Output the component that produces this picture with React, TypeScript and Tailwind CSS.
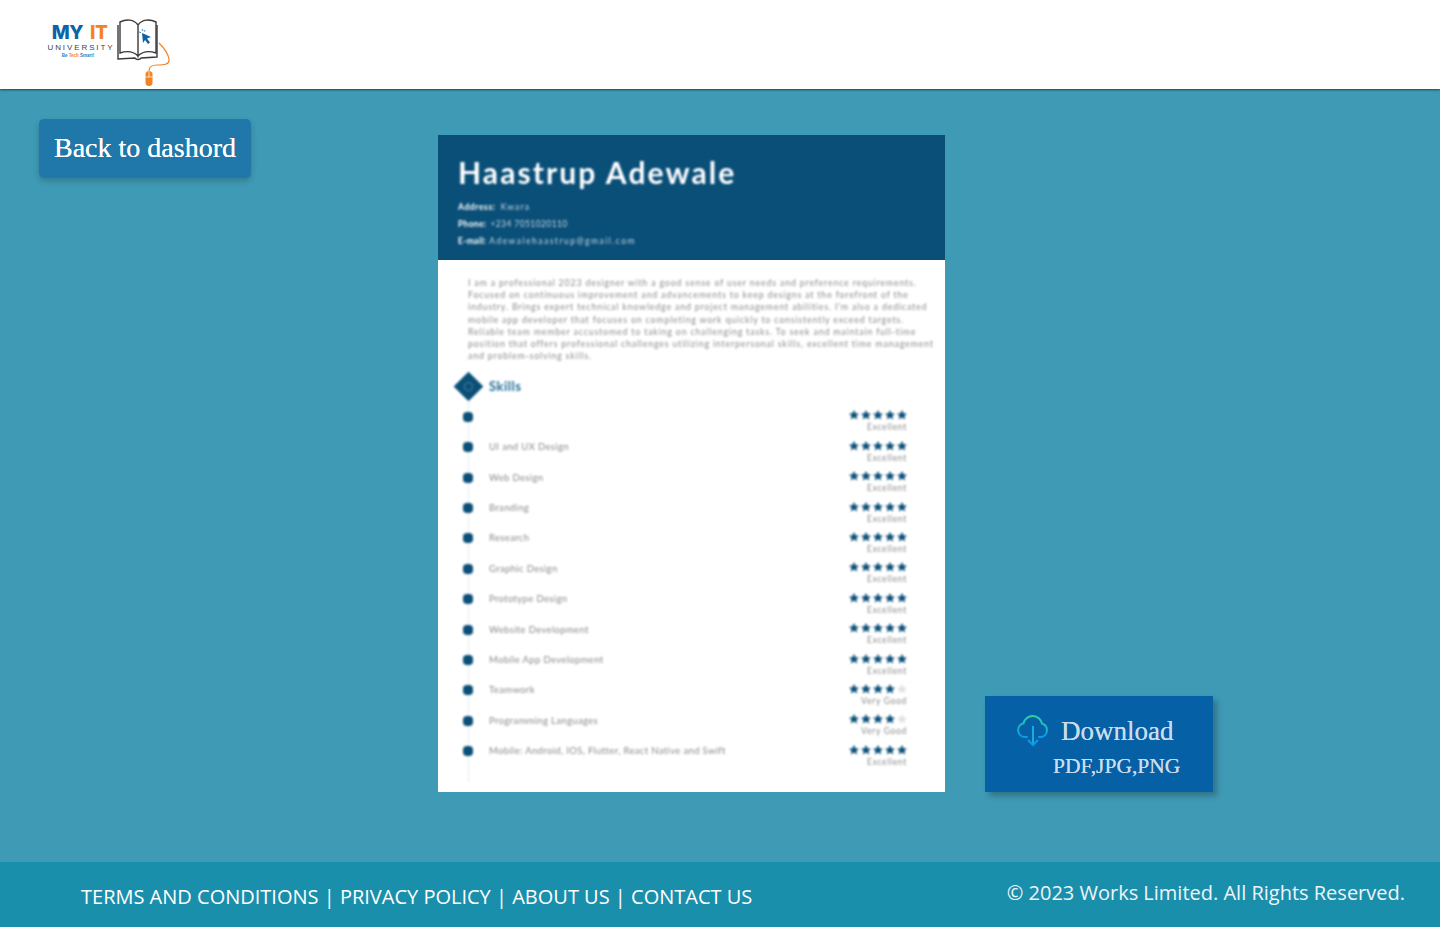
const ABOUT = [
  "I am a professional 2023 designer with a good sense of user needs and preference requirements.",
  "Focused on continuous improvement and advancements to keep designs at the forefront of the",
  "industry. Brings expert technical knowledge and project management abilities. I'm also a dedicated",
  "mobile app developer that focuses on completing work quickly to consistently exceed targets.",
  "Reliable team member accustomed to taking on challenging tasks. To seek and maintain full-time",
  "position that offers professional challenges utilizing interpersonal skills, excellent time management",
  "and problem-solving skills.",
];

const SKILLS = [
  { name: "", stars: 5, label: "Excellent" },
  { name: "UI and UX Design", stars: 5, label: "Excellent" },
  { name: "Web Design", stars: 5, label: "Excellent" },
  { name: "Branding", stars: 5, label: "Excellent" },
  { name: "Research", stars: 5, label: "Excellent" },
  { name: "Graphic Design", stars: 5, label: "Excellent" },
  { name: "Prototype Design", stars: 5, label: "Excellent" },
  { name: "Website Development", stars: 5, label: "Excellent" },
  { name: "Mobile App Development", stars: 5, label: "Excellent" },
  { name: "Teamwork", stars: 4, label: "Very Good" },
  { name: "Programming Languages", stars: 4, label: "Very Good" },
  { name: "Mobile: Android, IOS, Flutter, React Native and Swift", stars: 5, label: "Excellent" },
];

const LINKS = ["TERMS AND CONDITIONS", "PRIVACY POLICY", "ABOUT US", "CONTACT US"];

function Star({ on }: { on: boolean }) {
  return (
    <svg viewBox="0 0 24 24" className="w-[10px] h-[10px]">
      <path
        d="M12 0l3.800 8 8.200.8-6.200 5.400 1.900 8.300L12 18l-7.700 4.500 1.900-8.300L0 8.800 8.200 8z"
        fill={on ? "#0a4f78" : "#dfe3e6"}
      />
    </svg>
  );
}

function Logo() {
  return (
    <div className="flex items-start">
      <div className="w-[66px] mr-[3px] pt-[25px] flex flex-col items-center">
        <p className="mr-[3px] text-[19px] leading-[16px] font-extrabold font-['Inter',sans-serif] tracking-[-0.5px] whitespace-nowrap">
          <span className="text-[#0b63a8]">MY</span>
          <span className="text-[#f58220] ml-[7px]">IT</span>
        </p>
        <p className="mt-[2px] text-[8px] leading-[10px] tracking-[1.900px] text-[#444444] font-['Liberation_Sans',sans-serif] whitespace-nowrap">
          UNIVERSITY
        </p>
        <p className="mr-[6px] text-[4.500px] leading-[6px] font-bold text-[#2f7fb8] font-['Liberation_Sans',sans-serif] whitespace-nowrap">
          Be <span className="text-[#f58220]">Tech</span> Smart!
        </p>
      </div>
      <svg viewBox="0 0 56 70" className="w-[56px] h-[70px] mt-[18px]" fill="none">
        <path
          d="M3 4c6-3 14-3 18 3v31c-5-5-12-5-18-3zM21 7c4-6 12-6 18-3v31c-6-2-13-2-18 3z"
          stroke="#3a3a3a"
          strokeWidth="1.4"
        />
        <path d="M1 7v34l17-1c1 2 5 2 6 0l16-1V7" stroke="#3a3a3a" strokeWidth="1.4" />
        <path d="M25 15l9 4-4 1.500 3 4-2 1.500-3-4-2 3z" fill="#0b63a8" />
        <path d="M25 11l1 2M22 14l2 .6M28 12l-.6 1.600" stroke="#0b63a8" strokeWidth="0.8" />
        <path
          d="M42 25c4 4 9 10 10 16 1 6-6 6-12 6-5 0-8 1-8 6"
          stroke="#f58220"
          strokeWidth="1.200"
        />
        <rect x="28.500" y="53" width="7" height="15" rx="3.500" fill="#f58220" />
        <path d="M28.500 59h7M32 53v6" stroke="#ffffff" strokeWidth="0.7" />
      </svg>
    </div>
  );
}

function Resume() {
  return (
    <div className="w-[507px] h-[657px] bg-white overflow-hidden font-['Lato',sans-serif]">
      <div className="h-[125px] bg-[#0a4f78] overflow-hidden pl-[20px] pt-[19px] text-white">
        <div className="blur-[0.8px]">
          <h1 className="text-[30px] leading-[36px] font-bold tracking-[2.100px] whitespace-nowrap">
            Haastrup Adewale
          </h1>
          <div className="mt-[9px] text-[8.500px] leading-[17px] text-[#c5d6e1] whitespace-nowrap">
            <p><b className="text-white tracking-[0.6px]">Address:</b> <span className="ml-[3px] tracking-[1.200px]">Kwara</span></p>
            <p><b className="text-white tracking-[0.3px]">Phone:</b> <span className="ml-[2px] tracking-[0.400px]">+234 7051020110</span></p>
            <p><b className="text-white tracking-[0.300px]">E-mail:</b> <span className="ml-[1px] tracking-[1.500px]">Adewalehaastrup@gmail.com</span></p>
          </div>
        </div>
      </div>

      <div className="pl-[30px] pt-[17px] text-[8.900px] leading-[12.200px] tracking-[0.800px] text-[#8c8c8c] blur-[0.8px] whitespace-nowrap">
        {ABOUT.map((line) => (
          <p key={line}>{line}</p>
        ))}
      </div>

      <div className="mt-[9px] pl-[15px] flex items-center gap-[6px] blur-[0.8px]">
        <div className="w-[30px] h-[30px] flex items-center justify-center">
          <div className="w-[21px] h-[21px] rotate-45 bg-[#0a4f78] flex items-center justify-center">
            <div className="w-[9px] h-[9px] rounded-full border border-[#4d83a3]" />
          </div>
        </div>
        <span className="text-[13px] leading-[16px] font-bold tracking-[0.5px] text-[#1f6a96]">Skills</span>
      </div>

      <div className="relative mt-[9px] pl-[25px] pr-[38px] blur-[0.8px]">
        <div className="absolute left-[30px] top-[-9px] h-[381px] w-px bg-[#e6e9eb]" />
        {SKILLS.map((s, i) => (
          <div key={i} className="h-[30.400px] flex items-start justify-between">
            <div className="flex items-center pt-[0.500px]">
              <div className="relative w-[10px] h-[10px] bg-[#0a4f78] rounded-[4px]" />
              <span className="ml-[16px] h-[12px] text-[9.500px] leading-[12px] tracking-[0.350px] text-[#8a8a8a] whitespace-nowrap">
                {s.name}
              </span>
            </div>
            <div className="flex flex-col items-end">
              <div className="flex gap-[2px]">
                {[0, 1, 2, 3, 4].map((n) => (
                  <Star key={n} on={n < s.stars} />
                ))}
              </div>
              <span className="mt-[2px] text-[8.500px] leading-[11px] tracking-[0.700px] text-[#8a8a8a]">{s.label}</span>
            </div>
          </div>
        ))}
      </div>
    </div>
  );
}

export default function App() {
  return (
    <div className="min-h-screen flex flex-col bg-[#3f9ab5]">
      <header className="h-[89px] bg-white pl-[48px] shadow-[0_1px_2px_rgba(0,40,60,0.7)]">
        <Logo />
      </header>

      <main className="h-[773px] flex">
        <div className="w-[438px] pl-[39px] pt-[30px]">
          <button className="w-[212px] h-[59px] pb-[2px] rounded-[5px] bg-[#1f77aa] text-white text-[28px] font-['Liberation_Serif',serif] [text-shadow:0_0_0.6px_#ffffff] shadow-[0_3px_6px_rgba(0,0,0,0.2)]">
            Back to dashord
          </button>
        </div>
        <div className="pt-[46px]">
          <Resume />
        </div>
        <div className="pt-[607px] ml-[40px]">
          <button className="w-[228px] h-[96px] bg-[#0560a5] text-[#c9dcec] font-['Liberation_Serif',serif] [text-shadow:0_0_0.6px_#c9dcec] shadow-[4px_4px_6px_rgba(0,0,0,0.25)] flex flex-col items-start">
            <span className="flex items-center pl-[31px] pt-[18px]">
              <svg viewBox="0 0 34 34" className="w-[34px] h-[34px]" fill="none">
                <defs>
                  <linearGradient id="cloud" x1="0" y1="0" x2="0" y2="1">
                    <stop offset="0" stopColor="#2ad6a8" />
                    <stop offset="1" stopColor="#0a9be8" />
                  </linearGradient>
                </defs>
                <path
                  d="M11 23H9a7 7 0 0 1-1.500-13.800A9.500 9.500 0 0 1 26 9.500 7 7 0 0 1 25.500 23H23"
                  stroke="url(#cloud)"
                  strokeWidth="2"
                  strokeLinecap="round"
                />
                <path d="M17 12v18" stroke="#12b0d8" strokeWidth="2" />
                <path d="M12 26l5 5 5-5" stroke="#0a9be8" strokeWidth="2" />
              </svg>
              <span className="ml-[11px] text-[27px] leading-[34px]">Download</span>
            </span>
            <span className="pl-[68px] mt-[4px] text-[21.500px] leading-[28px]">PDF,JPG,PNG</span>
          </button>
        </div>
      </main>

      <footer className="h-[65px] bg-[#1a8fac] flex justify-between text-white font-['Open_Sans',sans-serif] text-[20px]">
        <nav className="pl-[81px] pt-[21px] flex leading-[28px]">
          {LINKS.map((l, i) => (
            <span key={l} className="whitespace-nowrap">
              {i > 0 && <span className="mx-[5.200px]">|</span>}
              {l}
            </span>
          ))}
        </nav>
        <p className="pr-[35px] pt-[17px] leading-[28px] whitespace-nowrap text-[#eef5f8]">
          © 2023 Works Limited. All Rights Reserved.
        </p>
      </footer>
    </div>
  );
}
